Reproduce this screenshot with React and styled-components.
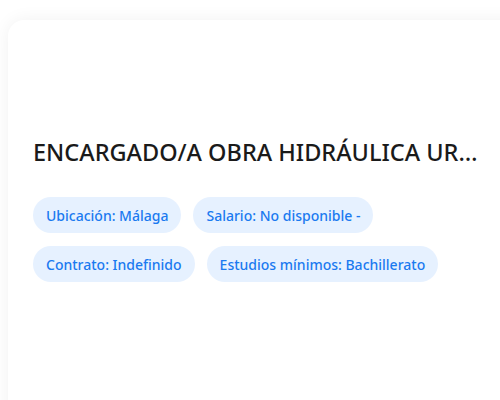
import React from "react";
import styled, { createGlobalStyle } from "styled-components";

const GlobalStyle = createGlobalStyle`
  html, body {
    margin: 0;
    background: #ffffff;
  }
  body {
    font-family: "Noto Sans", "Open Sans", sans-serif;
  }
`;

const Page = styled.main`
  box-sizing: border-box;
  width: 500px;
  height: 400px;
  overflow: hidden;
  padding: 20px 0 0 8px;
`;

const Card = styled.article`
  box-sizing: border-box;
  width: 520px;
  min-height: 480px;
  padding: 116px 25px 24px;
  background: #ffffff;
  border-radius: 16px;
  box-shadow: 0 0 18px rgba(0, 0, 0, 0.06);
`;

const Title = styled.h2`
  margin: 0;
  width: 452px;
  font-size: 23.5px;
  line-height: 32px;
  font-weight: 500;
  color: #1a1a1a;
  white-space: nowrap;
  overflow: hidden;
  text-overflow: ellipsis;
`;

const Tags = styled.div`
  display: flex;
  flex-wrap: wrap;
  gap: 13px 12px;
  margin-top: 29px;
  width: 458px;
`;

const Tag = styled.span`
  display: inline-flex;
  align-items: center;
  height: 36px;
  padding: 0 13px;
  border-radius: 18px;
  background: #e6f1ff;
  color: #1a7af0;
  font-size: 14px;
  font-weight: 500;
  white-space: nowrap;
`;

const tags = [
  "Ubicación: Málaga",
  "Salario: No disponible -",
  "Contrato: Indefinido",
  "Estudios mínimos: Bachillerato",
];

export default function App() {
  return (
    <>
      <GlobalStyle />
      <Page>
        <Card>
          <Title>ENCARGADO/A OBRA HIDRÁULICA URBANA</Title>
          <Tags>
            {tags.map((t) => (
              <Tag key={t}>{t}</Tag>
            ))}
          </Tags>
        </Card>
      </Page>
    </>
  );
}
